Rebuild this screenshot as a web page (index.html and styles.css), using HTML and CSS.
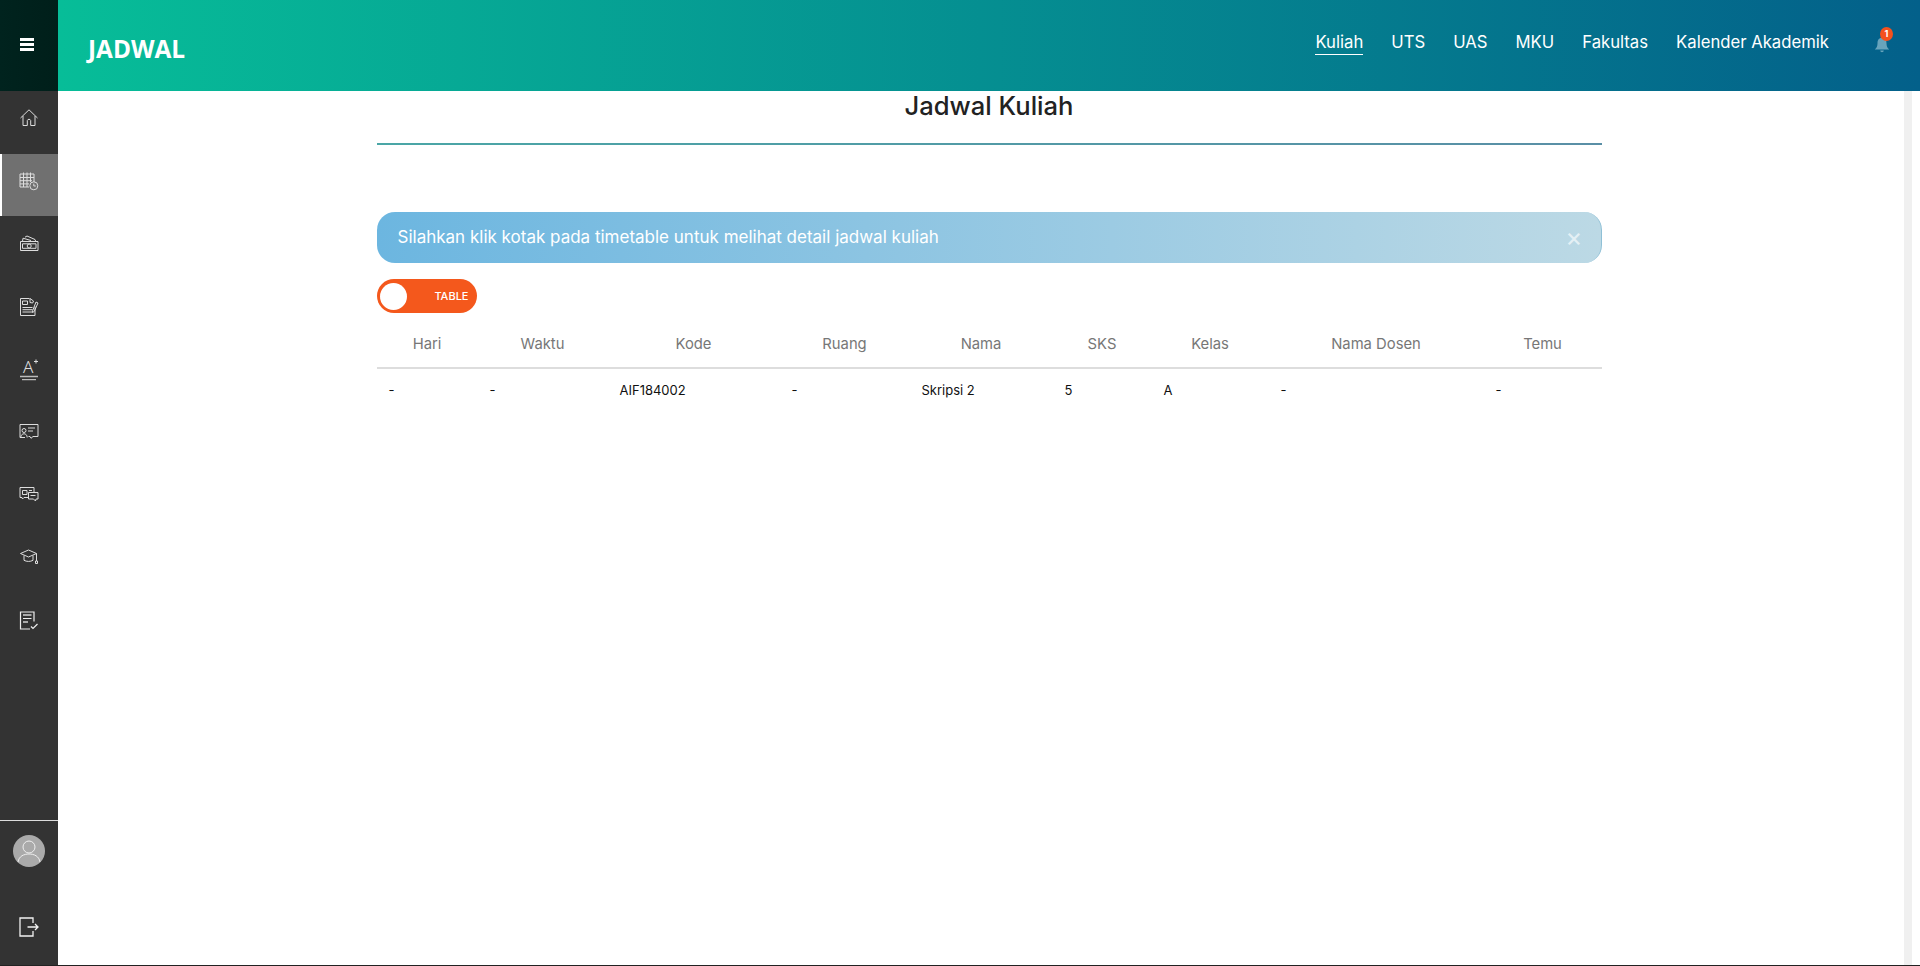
FILE: index.html
```html
<!DOCTYPE html>
<html lang="id">
<head>
    <meta charset="UTF-8">
    <title>Jadwal Kuliah</title>
    <link rel="stylesheet" href="styles.css">
</head>
<body>
<div class="app">
    <aside class="sidebar">
        <div class="burger"><span></span><span></span><span></span></div>
        <nav class="side-nav">
            <a class="side-item">
                <svg class="side-icon" viewBox="0 0 20 20"><path d="M1.500 10 10 1.800 18.500 10M4 8v9.500h4.300v-5a1.800 1.800 0 0 1 3.400 0v5H16V8"/></svg>
            </a>
            <a class="side-item active">
                <svg class="side-icon" viewBox="0 0 20 20"><path d="M15 11V3H1v13h9M1 6.500h14M1 9.700h12M1 12.900h9M4.500 1.500v14.500M8 1.500v14.500M11.500 1.500V11"/><circle cx="14.800" cy="14.800" r="4"/><path d="M14.800 12.600v2.400h2"/></svg>
            </a>
            <a class="side-item">
                <svg class="side-icon" viewBox="0 -1 20 20"><path d="M1.500 7.500h17.500v9H1.500zM3.500 7.500 4 4.200 12 6.500M6 3.200l2-1.200 8 3.500.8 2M3.500 9.800h13.500v4.500H3.500z"/><circle cx="10.200" cy="12" r="2"/></svg>
            </a>
            <a class="side-item">
                <svg class="side-icon" viewBox="0 -1 20 20"><path d="M10.500 1.500H1.500v17h14.500v-9M3.500 4h5v3.500h-5zM3.500 10.500h10M3.500 12.700h10M3.500 15h10"/><path d="M11 1.500l3.500 2.500-.8 2-2.700-.5zM17 5l2 1-3.800 8.500-1.700 1 .2-2z"/></svg>
            </a>
            <a class="side-item">
                <svg class="side-icon" viewBox="0 0 20 20"><text class="grade" x="4" y="14.700">A</text><path d="M17 1.500v4M15 3.500h4M3 21.700h14"/><path class="line" d="M1 18.500h18"/></svg>
            </a>
            <a class="side-item">
                <svg class="side-icon" viewBox="0 -1 20 20"><path d="M6 15.500H1V2.500h18v12h-5l-2 1.800-1-1.800H9.500M9 6h7M9 9h5"/><circle cx="5" cy="8.500" r="2"/><path d="M1.800 15.500c0-5 6.400-5 6.400 0"/></svg>
            </a>
            <a class="side-item">
                <svg class="side-icon" viewBox="0 -2 20 20"><path d="M9 12.500H5l-1.500 1.500-.5-1.500H1V2.500h14V7M3.500 5.500H8v4H3.500zM10 5.500h3"/><path d="M9.500 7.500H19v6.500h-2l-.5 2-2-2H9.500zM11.500 10.500h5"/></svg>
            </a>
            <a class="side-item">
                <svg class="side-icon" viewBox="0 0 20 20"><path d="M1.500 7.500 9.500 4l8 3.500-8 3.500zM5 9.500v4.800c2.500 1.500 6.500 1.500 9 0V9.500M17.500 7.500v7.500"/><path d="M16.500 15h2v2.500h-2z"/></svg>
            </a>
            <a class="side-item">
                <svg class="side-icon report" viewBox="0 -2.500 20 20"><path d="M15 11V1.500H1.500v17H11M4 8h8.500"/><path class="thick" d="M4 4.500h8.500M4 11.500h5"/><path d="M12 16l2 2 4.500-4.500"/></svg>
            </a>
        </nav>
        <div class="side-foot">
            <div class="avatar">
                <svg viewBox="0 0 32 32"><circle cx="16" cy="12" r="6"/><path d="M5 27c1-6 6-8 11-8s10 2 11 8"/></svg>
            </div>
            <svg class="logout" viewBox="0 0 20 20"><path d="M14 6V1H1v18h13v-5M8.500 10H19M16 7l3 3-3 3"/></svg>
        </div>
    </aside>
    <div class="main">
        <header class="topbar">
            <div class="brand">JADWAL</div>
            <nav class="top-nav">
                <a class="current">Kuliah</a>
                <a>UTS</a>
                <a>UAS</a>
                <a>MKU</a>
                <a>Fakultas</a>
                <a>Kalender Akademik</a>
            </nav>
            <div class="bell">
                <svg viewBox="0 0 20 20"><path d="M10 2c3.500 0 5 2.800 5 6 0 3.500 1 5 3 7H2c2-2 3-3.500 3-7 0-3.200 1.500-6 5-6zM8 16h4a2 2 0 0 1-4 0z"/></svg>
                <span class="badge">1</span>
            </div>
        </header>
        <main class="page">
            <h1 class="title">Jadwal Kuliah</h1>
            <div class="alert">
                <span>Silahkan klik kotak pada timetable untuk melihat detail jadwal kuliah</span>
                <span class="close">×</span>
            </div>
            <div class="toggle">
                <span class="knob"></span>
                <span class="toggle-label">TABLE</span>
            </div>
            <table class="schedule">
                <colgroup>
                    <col class="c1"><col class="c2"><col class="c3"><col class="c4"><col class="c5"><col class="c6"><col class="c7"><col class="c8"><col class="c9">
                </colgroup>
                <thead>
                    <tr>
                        <th>Hari</th><th>Waktu</th><th>Kode</th><th>Ruang</th><th>Nama</th><th>SKS</th><th>Kelas</th><th>Nama Dosen</th><th>Temu</th>
                    </tr>
                </thead>
                <tbody>
                    <tr>
                        <td>-</td><td>-</td><td>AIF184002</td><td>-</td><td>Skripsi 2</td><td>5</td><td>A</td><td>-</td><td>-</td>
                    </tr>
                </tbody>
            </table>
        </main>
        <div class="scroll-track"></div>
    </div>
</div>
</body>
</html>
```

FILE: styles.css
```css
*{
    margin: 0;
    padding: 0;
    box-sizing: border-box;
}
html, body{
    height: 100%;
    overflow: hidden;
}
body{
    font-family: Inter, "Noto Sans", sans-serif;
    background-color: #fff;
    color: #222;
}
.app{
    display: flex;
    height: 966px;
    border-bottom: 1px solid #222;
}

/* sidebar */
.sidebar{
    width: 58px;
    flex-shrink: 0;
    display: flex;
    flex-direction: column;
    background-color: #333;
}
.burger{
    height: 91px;
    flex-shrink: 0;
    display: flex;
    flex-direction: column;
    align-items: center;
    gap: 2px;
    padding: 38px 4px 0 0;
    background: linear-gradient(90deg, #00231e, #001f1a);
}
.burger span{
    width: 14px;
    height: 3px;
    background-color: #fff;
}
.side-item{
    height: 62.5px;
    display: flex;
    align-items: center;
    justify-content: center;
    padding-bottom: 8px;
}
.side-item.active{
    background-color: #707070;
    border-left: 2px solid #fff;
    padding-right: 2px;
}
.side-icon{
    width: 20px;
    height: 20px;
    fill: none;
    stroke: #ddd;
    stroke-width: 1;
    overflow: visible;
}
.side-icon .grade{
    font-family: "Noto Sans", sans-serif;
    font-size: 17px;
    font-weight: 300;
    fill: #ddd;
    stroke: none;
}
.side-icon .line{
    stroke: #bbb;
    stroke-width: 1.500;
}
.side-icon .thick{
    stroke: #aaa;
    stroke-width: 2;
}
.side-icon.report{
    stroke: #eee;
    stroke-width: 1.200;
}
.side-foot{
    margin-top: auto;
    height: 145px;
    border-top: 1px solid #ddd;
    display: flex;
    flex-direction: column;
    align-items: center;
}
.avatar{
    width: 32px;
    height: 32px;
    margin-top: 14px;
    border-radius: 50%;
    background-color: #aaa;
    overflow: hidden;
}
.avatar svg{
    display: block;
    fill: none;
    stroke: #eee;
    stroke-width: 1;
}
.logout{
    width: 20px;
    height: 20px;
    margin-top: 50px;
    fill: none;
    stroke: #f2f2f2;
    stroke-width: 1.300;
}

/* header */
.main{
    flex: 1;
    position: relative;
    display: flex;
    flex-direction: column;
}
.topbar{
    height: 91px;
    flex-shrink: 0;
    display: flex;
    align-items: center;
    padding-left: 30px;
    padding-right: 29px;
    background: linear-gradient(90deg, #07bd98, #03608a);
    color: #fff;
}
.brand{
    font-family: "Open Sans", sans-serif;
    font-size: 24.400px;
    font-weight: 700;
    padding-top: 5px;
    flex: 1;
}
.top-nav{
    display: flex;
    gap: 28px;
    font-size: 16.700px;
    margin-right: 44px;
    padding-bottom: 5px;
}
.top-nav a{
    padding-bottom: 2px;
    border-bottom: 1px solid transparent;
}
.top-nav a.current{
    border-bottom-color: #fff;
}
.bell{
    position: relative;
    width: 18px;
    height: 18px;
    margin-top: -1px;
}
.bell svg{
    display: block;
    fill: #68a4bc;
}
.badge{
    position: absolute;
    top: -9px;
    left: 7px;
    width: 13px;
    height: 14px;
    border-radius: 50%;
    background-color: #f4511e;
    font-size: 9px;
    font-weight: 700;
    line-height: 14px;
    text-align: center;
}

/* page */
.page{
    width: 1225px;
    margin: 0 auto;
}
.title{
    font-size: 25.600px;
    font-weight: 500;
    line-height: 28px;
    text-align: center;
    padding: 1px 0 23px;
    border-bottom: 2px solid;
    border-image: linear-gradient(90deg, #4aa6a6, #5a8fa6) 1;
    color: #222;
}
.alert{
    margin-top: 67px;
    height: 51px;
    display: flex;
    align-items: center;
    justify-content: space-between;
    padding: 0 18px 2px 21px;
    border-radius: 18px;
    border-right: 1px solid #8fc0d6;
    background: linear-gradient(90deg, #6cb6e0, #bcd9e5);
    color: #fff;
    font-size: 17px;
}
.close{
    font-size: 26px;
    line-height: 26px;
    color: #e4f0f5;
}
.toggle{
    width: 100px;
    height: 34px;
    margin-top: 16px;
    display: flex;
    align-items: center;
    justify-content: space-between;
    padding: 0 8px 0 3px;
    border-radius: 17px;
    background-color: #f4581c;
    color: #fff;
}
.knob{
    width: 27px;
    height: 27px;
    border-radius: 50%;
    background-color: #fff;
}
.toggle-label{
    font-size: 11px;
    font-weight: 500;
}
.schedule{
    width: 100%;
    margin-top: 8px;
    border-collapse: collapse;
    table-layout: fixed;
}
.c1{ width: 101px; }
.c2{ width: 130px; }
.c3{ width: 172px; }
.c4{ width: 130px; }
.c5{ width: 143px; }
.c6{ width: 99px; }
.c7{ width: 117px; }
.c8{ width: 215px; }
.c9{ width: 118px; }
.schedule th{
    height: 47px;
    font-size: 14.800px;
    font-weight: 400;
    color: #777;
    text-align: center;
    border-bottom: 2px solid #ddd;
}
.schedule td{
    height: 43px;
    padding-left: 12px;
    font-size: 13px;
    color: #111;
}

.scroll-track{
    position: absolute;
    top: 91px;
    right: 8px;
    bottom: 0;
    width: 8px;
    background-color: #f0f0f0;
}
```
